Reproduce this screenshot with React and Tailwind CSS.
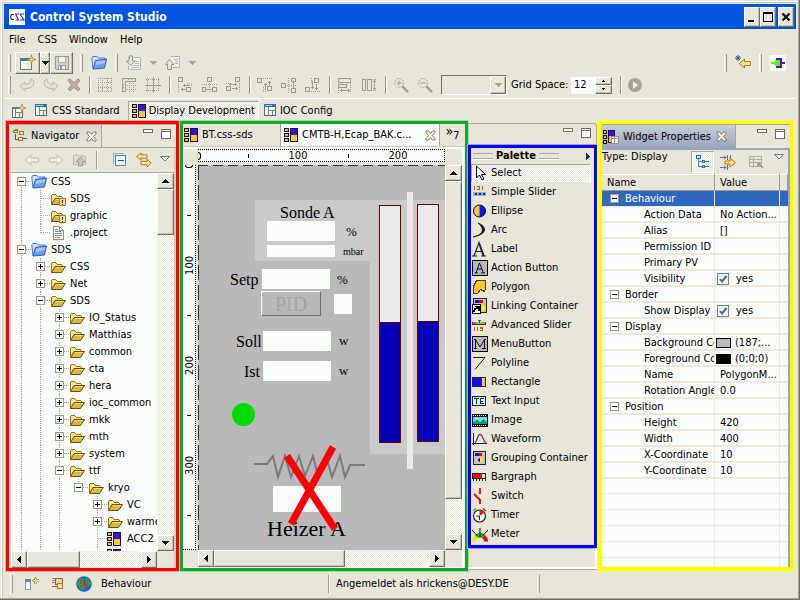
import React from 'react';

const DITHER = 'bg-[repeating-conic-gradient(#fbfdfa_0_25%,#e6e5d7_0_50%)] bg-[length:2px_2px]';
const RAISED = 'border border-t-white border-l-white border-r-[#716f64] border-b-[#716f64] bg-[#e7e6d8] shadow-[inset_-1px_-1px_0_#c4c2b2]';

/* ---------- icons ---------- */

function Svg({ children, w = 16, h = 16, smooth = false }) {
  return (
    <svg width={w} height={h} viewBox={`0 0 ${w} ${h}`} fill="none" className="block shrink-0" shapeRendering={smooth ? 'auto' : 'crispEdges'} aria-hidden="true">
      {children}
    </svg>
  );
}

const DisplayIcon = () => (
  <Svg w={14} h={14}>
    <path d="M0 0h5v4H0zM0 5h5v4H0zM0 10h5v4H0zM6 0h8v14H6z" fill="#1a1030" />
    <path d="M1 1h3v2H1zM1 6h3v2H1zM1 11h3v2H1z" fill="#f5b52a" />
    <path d="M7 1h6v6H7z" fill="#3a0fe0" />
    <path d="M7 7h6v6H7z" fill="#ffc832" />
  </Svg>
);

const PerspectiveIcon = () => (
  <Svg w={12} h={13}>
    <rect x="0.5" y="0.5" width="11" height="11" fill="#eef9ff" stroke="#4a6b86" />
    <path d="M0 0h12v3H0z" fill="#2f6fae" />
    <path d="M1 1h7v1H1z" fill="#8fd0f0" />
    <path d="M4.5 3v8M5 6.5h6M8.5 7v4" stroke="#7d8a6a" />
  </Svg>
);

const OpenPerspectiveIcon = () => (
  <Svg w={14} h={14}>
    <rect x="0.5" y="3.5" width="10" height="10" fill="#f6f4e4" stroke="#5f6a72" />
    <path d="M0 3h8v2H0z" fill="#4d7fa6" />
    <path d="M3.5 5v8M4 8.5h6M7.5 9v4" stroke="#7d8a6a" />
    <path d="M10 0l1 3 3 1-3 1-1 3-1-3-3-1 3-1z" fill="#ffe27a" stroke="#9a7420" strokeWidth="0.6" shapeRendering="auto" />
  </Svg>
);

const FolderIcon = ({ warn }) => (
  <Svg>
    <path d="M1 13V4h1V3h4v1h1v1h5v3H5l-3 5z" fill="#f5e59a" />
    <path d="M1 4h1v9H1zM2 3h4v1H2zM6 4h1v1H6zM7 5h5v1H7zM12 6h1v1h-1z" fill="#8c7a10" />
    <path d="M1.5 13.500L5 7.500h10.500L11.500 13.500z" fill="#dcb83c" stroke="#5f5210" shapeRendering="auto" />
    <path d="M5.500 8.500h8" stroke="#f3dc86" />
    {warn && (
      <g>
        <path d="M9 7h7v8H9z" fill="#b5722a" />
        <path d="M10 8h5v6h-5z" fill="#f7dca0" />
        <path d="M12 9h1v3h-1zM12 13h1v1h-1z" fill="#5a2a00" />
      </g>
    )}
  </Svg>
);

const ProjectIcon = () => (
  <Svg smooth>
    <path d="M2 14L.8 3l1-1.500h4l1.700 1.500h6.500v3" fill="#cfe0fb" stroke="#4b79cf" />
    <path d="M2 14l2.500-8.500L15.500 4l-2 9z" fill="#6f9df0" stroke="#2a5bc0" />
    <path d="M5.300 6.500l9-1.200-.7 3L4.500 10z" fill="#a9c6fa" />
  </Svg>
);

const FileIcon = () => (
  <Svg>
    <path d="M3.5 1.500h6l4 4v9h-10z" fill="#fffef4" stroke="#9a8f62" />
    <path d="M9.500 1.500v4h4" stroke="#9a8f62" />
    <path d="M5 4.500h3M5 6.500h6M5 8.500h7M5 10.500h7M5 12.500h5" stroke="#6f8fc8" />
  </Svg>
);

const TreeTabIcon = () => (
  <Svg>
    <path d="M3.500 6v5.500h4M11 10.500h4M7 4.500h3" stroke="#2f5f9a" />
    <path d="M1 2h2V1h3v4H1zM7 3h5v4H7zM6 9h5v4H6z" fill="#a8741a" />
    <path d="M2 3h3v1H2zM8 4h3v2H8zM7 10h3v2H7z" fill="#ffe79a" />
  </Svg>
);

const CloseX = () => (
  <Svg w={11} h={11} smooth>
    <path d="M1 1h2.500l2 2.500L7.500 1H10v1.500L7.500 5.500 10 8.500V10H7.500l-2-2.500L3.500 10H1V8.500l2.500-3L1 2.500z" fill="#f4f3ea" stroke="#7a786c" />
  </Svg>
);

const Min = () => (
  <Svg w={10} h={5}><rect x="0.5" y="0.5" width="9" height="3" fill="#fff" stroke="#6e6c60" /></Svg>
);
const Max = () => (
  <Svg w={10} h={11}>
    <rect x="0.5" y="0.5" width="9" height="9" fill="#fff" stroke="#6e6c60" />
    <path d="M1 2.500h8" stroke="#6e6c60" />
  </Svg>
);
const ViewMenu = () => (
  <Svg w={10} h={6} smooth><path d="M.5.500h9L5 5z" fill="#fff" stroke="#77756a" /></Svg>
);
const Down = ({ c = '#000' }) => <Svg w={7} h={4}><path d="M0 0h7L3.500 4z" fill={c} /></Svg>;
const Up = () => <Svg w={7} h={4}><path d="M3.500 0L7 4H0z" fill="#000" /></Svg>;
const Left = () => <Svg w={4} h={7}><path d="M4 0v7L0 3.500z" fill="#000" /></Svg>;
const Right = ({ c = '#000' }) => <Svg w={4} h={7}><path d="M0 0v7l4-3.500z" fill={c} /></Svg>;

const ArrowLeftGray = () => (
  <Svg smooth><path d="M1 8l6-5v3h7.500v4H7v3z" fill="#eeede4" stroke="#bdbcb0" /></Svg>
);
const ArrowRightGray = () => (
  <Svg smooth><path d="M15 8L9 3v3H1.500v4H9v3z" fill="#eeede4" stroke="#bdbcb0" /></Svg>
);
const UpFolder = () => (
  <Svg smooth>
    <path d="M1.500 12.500v-9l2-1 3 1 7 1v8z" fill="#deddd2" stroke="#bab9ad" />
    <path d="M8.500 5L13 10h-2.500v4h-4v-4H4z" fill="#c3c4be" stroke="#9d9e97" />
  </Svg>
);
const CollapseAll = () => (
  <Svg>
    <path d="M1.500 11.500v-10h10" stroke="#8bb0c8" />
    <rect x="3.5" y="3.5" width="10" height="10" fill="#e9f7fd" stroke="#4a88ae" />
    <path d="M6 8.500h6" stroke="#1c4f9c" />
  </Svg>
);
const LinkArrows = () => (
  <Svg smooth>
    <path d="M.7 4.500L5 .8v2h6v3.400H5v2z" fill="#ffe6a0" stroke="#b9781a" />
    <path d="M15.300 11L11 7.300v2H5v3.400h6v2z" fill="#ffe6a0" stroke="#b9781a" />
  </Svg>
);
const NewWizard = () => (
  <Svg w={17}>
    <rect x="1.5" y="3.5" width="11" height="11" fill="#f8fbfd" stroke="#5f7ea0" />
    <path d="M1 3h9v3H1z" fill="#3f78b8" />
    <path d="M3 9c5 0 6 2 5 5h4V6z" fill="#f8e9a8" />
    <path d="M12.500 0l1 3.500L17 4.500l-3.500 1-1 3.500-1-3.500-3.500-1 3.500-1z" fill="#ffe88a" stroke="#95701c" strokeWidth="0.7" shapeRendering="auto" />
  </Svg>
);
const Save = () => (
  <Svg>
    <path d="M1.500 1.500h13v13h-12l-1-1z" fill="#cfd3d2" stroke="#959a9c" />
    <path d="M4.500 2v5h7V2" fill="#f2f2ec" stroke="#a5a9aa" />
    <path d="M4.500 14v-4h7v4" fill="#f2f2ec" stroke="#959a9c" />
    <path d="M6 11h2v3H6z" fill="#8a8f92" />
  </Svg>
);
const GrayTri = () => <Svg w={7} h={4}><path d="M0 0h7L3.500 4z" fill="#a9a898" /></Svg>;
const DocArrow = ({ up }) => (
  <Svg smooth>
    <path d={up ? 'M5.500 1.500h9v11h-7' : 'M6.500 2.500h8v12h-12v-4'} fill="#f1f0e6" stroke="#b5b4a8" />
    <path d={up ? 'M9 4.500h4M10 6.500h3M10 8.500h3' : 'M8 6.500h5M9 8.500h4M7 10.500h6M5 12.500h8'} stroke="#b3b7be" />
    <path d={up ? 'M4.500 4.500L9 9.500H6.500v5h-4v-5H.5z' : 'M3 1h3.500v5H9L4.700 10.500.5 6H3z'} fill="#e8e7dc" stroke="#94938a" />
  </Svg>
);
const Undo = ({ flip }) => (
  <Svg smooth>
    <g transform={flip ? 'translate(16 0) scale(-1 1)' : undefined}>
      <path d="M1 9l5-4v2.500c4 0 6-2 6-5.500 3 1 3.500 4 2 6.500-1.500 2.300-4 3-8 3V14z" fill="#e4e3d8" stroke="#b8b7ab" />
    </g>
  </Svg>
);
const DeleteX = () => (
  <Svg w={14} h={14} smooth>
    <path d="M1 2l2-1 4 3.500L11 1l2 1.500L9.500 7l3.500 4-2 2-4-3.500L3 13l-2-2 3.500-4z" fill="#c0a9a6" stroke="#a5918c" />
  </Svg>
);
const G = '#9c9c8e';
const GridIcon = () => (
  <Svg><path d="M1 1.500h14M1 5.500h14M1 10.500h14M1 14.500h14M1.500 1v14M5.500 1v14M10.500 1v14M14.500 1v14" stroke={G} strokeDasharray="1 1" /></Svg>
);
const RulerIcon = () => (
  <Svg>
    <path d="M1.500 1.500h13v3h-10v10h-3zM7.500 1v2M10.500 1v2M1 7.500h2M1 10.500h2" stroke={G} />
    <path d="M8.500 6v9M12.500 6v9M6 8.500h9M6 12.500h9" stroke={G} strokeDasharray="1 1" />
  </Svg>
);
const SnapIcon = () => (
  <Svg>
    <path d="M1 2.500h14M1 13.500h14M2.500 1v14M13.500 1v14" stroke={G} strokeDasharray="1 1" />
    <path d="M0 8h16M8 0v16" stroke={G} />
  </Svg>
);
const ALIGN = [
  { boxes: 'M1.500.500h4v4h-4zM9.500 10.500h4v4h-4z', dots: 'M1.500 6v9M10 6.500h5M14.500 6v3', arrow: 'M4 12.500h5M5.500 11v3M6 8.500h7M7.500 7v3' },
  { boxes: 'M6.500.500h4v4h-4zM1.500 10.500h3v4h-3zM11.500 10.500h4v4h-4z', dots: 'M8.500 6v9M1 7.500h15', arrow: 'M5 12.500h3M9 12.500h2' },
  { boxes: 'M10.500.500h4v4h-4zM1.500 9.500h4v4h-4z', dots: 'M14.500 6v9M1 6.500h5', arrow: 'M7 11.500h6M11.500 10v3M4 7.500h8M10.500 6v3' },
];
const AlignIcon = ({ a = 0, vertical }) => (
  <Svg>
    <g transform={vertical ? 'matrix(0 1 1 0 0 0)' : undefined}>
      <path d={ALIGN[a].boxes} stroke={G} />
      <path d={ALIGN[a].dots} stroke={G} strokeDasharray="1 1" />
      <path d={ALIGN[a].arrow} stroke={G} />
    </g>
  </Svg>
);
const MatchWidth = () => (
  <Svg>
    <path d="M1.500 1.500h12v4h-12zM1.500 7.500h8v3h-8zM3 13.500h10M4 12v3M11 12v3" stroke={G} />
    <path d="M1.500 11v5M13.500 6v10" stroke={G} strokeDasharray="1 1" />
  </Svg>
);
const MatchHeight = () => (
  <Svg>
    <path d="M1.500 2.500h3v11h-3zM6.500 2.500h4v11h-4zM13.500 3v10M12 4.500h3M12 11.500h3" stroke={G} />
    <path d="M10 2.500h6M10 13.500h6" stroke={G} strokeDasharray="1 1" />
  </Svg>
);
const ZoomIcon = ({ plus }) => (
  <Svg smooth>
    <circle cx="6" cy="6" r="4.5" stroke="#a9a99b" strokeDasharray="2 1" />
    <path d={plus ? 'M3.500 6h5M6 3.500v5' : 'M3.500 6h5'} stroke="#a09f90" />
    <path d="M9.500 9.500L15 15" stroke="#a5a596" strokeWidth="2.5" />
  </Svg>
);
const Play = () => (
  <Svg w={14} h={14} smooth><circle cx="7" cy="7" r="7" fill="#a4a596" /><path d="M5 3l5 4-5 4z" fill="#f1f0e6" /></Svg>
);
const LastEdit = () => (
  <Svg smooth>
    <path d="M4.500 8.500L9.500 4v2.500h6v4h-6V13z" fill="#ffe08a" stroke="#b07a14" />
    <path d="M3 0v6M0 3h6M1 1l4 4M5 1L1 5" stroke="#2a4f7a" strokeWidth="0.9" />
  </Svg>
);
const Plug = () => (
  <Svg>
    <path d="M0 0h16v16H0z" fill="#fafdfa" />
    <path d="M6 3h6v10H6v-2h4V5H6zM12 7h3v2h-3z" fill="#4a0ee0" />
    <path d="M1 7h4V5h5v6H5V9H1z" fill="#63f500" />
  </Svg>
);
const Logo = () => (
  <Svg>
    <path d="M0 0h16v16H0z" fill="#fff" />
    <path d="M5 5.500H2.500L1.500 8l1 2.500H5M6.500 5l3 6H6.500M11 5l4 6h-4M6.500 5H10M11 5h4" stroke="#3a3a6a" strokeWidth="1.2" shapeRendering="auto" />
  </Svg>
);
const WidgetIcon = () => (
  <Svg>
    <path d="M0 1h4v4H0zM0 6h4v4H0zM0 11h4v4H0zM5 1h7v13H5z" fill="#1a1030" />
    <path d="M1 2h2v2H1zM1 7h2v2H1zM1 12h2v2H1z" fill="#f5b52a" />
    <path d="M6 2h5v5H6z" fill="#3a0fe0" /><path d="M6 7h3v6H6z" fill="#ffc832" />
    <rect x="8.5" y="7.5" width="7" height="7" fill="#fff" stroke="#8d8d86" />
    <path d="M8 9.500h8M11.500 8v7" stroke="#8d8d86" />
  </Svg>
);
const CategoriesIcon = () => (
  <Svg>
    <path d="M3.500 4v9M4 7.500h3M4 12.500h3" stroke="#4b80b4" />
    <rect x="1.5" y="1.5" width="4" height="3" fill="#b7dcf2" stroke="#2f6ea8" />
    <rect x="7.5" y="6.5" width="2" height="2" fill="#b7dcf2" stroke="#2f6ea8" />
    <rect x="7.5" y="11.5" width="2" height="2" fill="#b7dcf2" stroke="#2f6ea8" />
    <path d="M10 7.500h4M10 12.500h4" stroke="#3a7ac0" />
  </Svg>
);
const FilterIcon = () => (
  <Svg smooth>
    <path d="M5 7h5V4l5.500 4.500L10 13v-3H5z" fill="#ffe08a" stroke="#b07a14" />
    <path d="M0 3.500h6M4 1.500l2 2-2 2M7.500 1v5M10.500 1v3M0 13.500h6M4 11.500l2 2-2 2M7.500 11v5" stroke="#5d7182" />
  </Svg>
);
const DefaultsIcon = () => (
  <Svg smooth>
    <path d="M1.500 2.500h12v10h-12zM1 5.500h13M1 8.500h8M5.500 3v10" stroke="#adac9e" />
    <path d="M15 14l-5-5m0 3V9h3" stroke="#98978a" strokeWidth="1.5" />
  </Svg>
);

const P = {
  select: <Svg><path d="M4.500 1v12l3-3 2.500 5 2-1-2.500-4.500h4z" fill="#fff" stroke="#000" shapeRendering="auto" /></Svg>,
  slider: (
    <Svg>
      <path d="M2 2h1v4H2zM5 2h3v4H7V3H5zM5 5h2v1H5zM10 2h1v4h-1z" fill="#b85a10" />
      <path d="M1 8h13v4H1z" fill="#86aede" /><path d="M3 9h2v2H3zM7 9h2v2H7zM11 9h2v2h-2z" fill="#1c2c50" />
    </Svg>
  ),
  ellipse: <Svg smooth><circle cx="7.5" cy="8" r="6" fill="#1414e6" /><path d="M7.500 2a6 6 0 000 12z" fill="#ffc832" /><circle cx="7.5" cy="8" r="6" stroke="#101020" /></Svg>,
  arc: <Svg smooth><path d="M6 1c9 3.500 10 11-5 14C13 12 12 6 6 1z" fill="#111" stroke="#111" strokeWidth="0.8" /></Svg>,
  label: <Svg smooth><path d="M0 15h5M9 15h5M2 15L7 1.500l5 13.500M4 10.500h6.500" stroke="#222" strokeWidth="1.2" /><path d="M7 2l4.500 13" stroke="#222" strokeWidth="1.8" /></Svg>,
  action: <Svg><path d="M.5.500h15v15H.5z" fill="#b7b8b8" stroke="#000" /><path d="M3 13h3M9 13h4M4 13L7.500 3 11.500 13M5 9h5" stroke="#111" shapeRendering="auto" /></Svg>,
  polygon: <Svg><path d="M1.500 14.500v-7l3-6h9v8l-1 3-4-2-3 4z" fill="#ffc832" stroke="#4a3a10" /></Svg>,
  linking: (
    <Svg>
      <path d="M1.500.500h13v14h-13z" fill="#c3c4c4" stroke="#222" />
      <path d="M3 2h4v3H3z" fill="#1414e6" /><path d="M7 2h4v3H7z" fill="#f00000" /><path d="M10 6l4 4-4 4z" fill="#ffee00" />
      <path d="M.5 6.500h8v9h-8z" fill="#fff" stroke="#000" /><path d="M2 14c0-3 1-4 4-4M3 8.500h4v4" stroke="#000" strokeWidth="1.5" />
    </Svg>
  ),
  advanced: (
    <Svg>
      <path d="M0 5h14v3H0z" fill="#2c3a20" /><path d="M1 5h3v2H1z" fill="#f33" /><path d="M4 5h6v2H4z" fill="#6d2" /><path d="M10 5h3v2h-3z" fill="#f80" />
      <path d="M6 3h3v1H8v2H7V4H6z" fill="#3a3ae0" /><path d="M2 10h1v4H2zM5 10h1v4H5zM8 10h3v4H8v-1h2v-1H8z" fill="#b85a10" />
    </Svg>
  ),
  menu: <Svg><path d="M.5.500h15v15H.5z" fill="#b7b8b8" stroke="#000" /><path d="M2 12.500h3M10 12.500h4M3.500 12V3.500L8 11l4.500-7.500V12M2 3.500h2M12 3.500h2" stroke="#111" shapeRendering="auto" /></Svg>,
  polyline: <Svg smooth><path d="M1 2.500h12L3 14.500" stroke="#222" /></Svg>,
  rectangle: <Svg><path d="M.5 3.500h13v9H.5z" fill="#1010f0" stroke="#222" /><path d="M10 4h3v8h-3z" fill="#ffc832" /></Svg>,
  textinput: <Svg><path d="M.5 3.500h13v9H.5z" fill="#cdf6fb" stroke="#222" /><path d="M2 5.500h5M4.500 5v6M8.500 5v6M8 5.500h4M8 8h3M8 10.500h4" stroke="#224" /></Svg>,
  image: (
    <Svg>
      <path d="M0 2h16v13H0z" fill="#101010" /><path d="M1 5h14v7H1z" fill="#5fe0f4" /><path d="M1 12v-2l4-2 3 2 3-3 4 3v2z" fill="#1c9c5c" />
      <path d="M1 3.500h14M1 13.500h14" stroke="#fff" strokeDasharray="1 1" /><path d="M3 6h3v1H3z" fill="#eafcff" />
    </Svg>
  ),
  waveform: <Svg smooth><path d="M2 3h12v9H2z" fill="#d8f5f5" /><path d="M1.500 2v12M0 12.500h15" stroke="#222" /><path d="M3 12C5 11 5 3.500 8 3.500S11 11 14 12" stroke="#d01818" strokeWidth="1.3" /></Svg>,
  grouping: (
    <Svg>
      <path d="M1.500 1.500h12v13h-12z" fill="#c3c4c4" stroke="#222" />
      <path d="M3 3h4v3H3z" fill="#1414e6" /><path d="M7 3h3v3H7z" fill="#f00000" /><path d="M8 7v6L5 10z" fill="#1414e6" /><path d="M8 7v6l3-3z" fill="#ffee00" />
    </Svg>
  ),
  bargraph: <Svg><path d="M.5 4.500h13v5H.5z" fill="#f01010" stroke="#222" /><path d="M10 5h3v4h-3z" fill="#c4f5b4" /><path d="M1.500 10v2M4.500 10v2M7.500 10v2M10.500 10v2M13.500 10v2" stroke="#222" /></Svg>,
  switch: <Svg smooth><path d="M8 0v6M2 6l6 6M8 11v5" stroke="#f01010" strokeWidth="2" /></Svg>,
  timer: (
    <Svg smooth>
      <circle cx="7.5" cy="9" r="6" fill="#fff" stroke="#222" strokeWidth="1.2" /><path d="M7.500 9V3.500A5.500 5.500 0 0112 6z" fill="#f01010" />
      <path d="M7.500 9v4M4 9h3" stroke="#222" /><path d="M1 4l3-2.500" stroke="#1cc01c" strokeWidth="1.5" /><path d="M11 1.500L14 4" stroke="#f01010" strokeWidth="1.5" />
    </Svg>
  ),
  meter: (
    <Svg smooth>
      <path d="M0 15.500a8 8 0 013-6.500l3 3a4 4 0 00-2 3.500z" fill="#f5e400" />
      <path d="M3 9a8 8 0 0110 0l-3 3a4 4 0 00-4 0z" fill="#18b818" />
      <path d="M13 9a8 8 0 013 6.500h-4a4 4 0 00-2-3.500z" fill="#e01010" />
      <path d="M8 11V2M0 4l5 5.500M16 4l-5 5.500" stroke="#111" />
    </Svg>
  ),
};

/* ---------- shared parts ---------- */

const Grip = () => <span className="h-[18px] w-[3px] shrink-0 border-l border-r border-l-white border-r-[#9c9a8c]" />;
const Sep = () => <span className="-mr-[2px] h-[18px] w-[2px] shrink-0 border-l border-r border-l-[#9c9a8c] border-r-white" />;

function Tool({ name, children }) {
  return <button type="button" aria-label={name} className="flex h-5 shrink-0 items-center justify-center">{children}</button>;
}

function ScrollV({ thumb }) {
  return (
    <div className={`flex min-h-0 flex-col ${DITHER}`}>
      <button type="button" aria-label="Scroll up" className={`flex h-4 shrink-0 items-center justify-center ${RAISED}`}><Up /></button>
      <div className="min-h-0 flex-1"><div className={`${thumb} ${RAISED}`} /></div>
      <button type="button" aria-label="Scroll down" className={`flex h-4 shrink-0 items-center justify-center ${RAISED}`}><Down /></button>
    </div>
  );
}

function ScrollH({ thumb }) {
  return (
    <div className={`flex min-w-0 ${DITHER}`}>
      <button type="button" aria-label="Scroll left" className={`flex w-4 shrink-0 items-center justify-center ${RAISED}`}><Left /></button>
      <div className="flex min-w-0 flex-1"><div className={`${thumb} ${RAISED}`} /></div>
      <button type="button" aria-label="Scroll right" className={`flex w-4 shrink-0 items-center justify-center ${RAISED}`}><Right /></button>
    </div>
  );
}

function ViewButtons() {
  return (
    <div className="flex items-start gap-2 px-[5px] pt-1">
      <button type="button" aria-label="Minimize view"><Min /></button>
      <button type="button" aria-label="Maximize view"><Max /></button>
    </div>
  );
}

/* ---------- navigator ---------- */

// g holds one character per indent column: "|" line, "." blank, "+" / "-" node box,
// "T" branch, "L" last branch. `last` marks a node box with no sibling below it.
const TREE = [
  { g: '-', top: true, icon: 'project', name: 'CSS' },
  { g: '|T', icon: 'warn', name: 'SDS' },
  { g: '|T', icon: 'warn', name: 'graphic' },
  { g: '|L', icon: 'file', name: '.project' },
  { g: '-', icon: 'project', name: 'SDS' },
  { g: '|+', icon: 'folder', name: 'CSS' },
  { g: '|+', icon: 'folder', name: 'Net' },
  { g: '|-', icon: 'folder', name: 'SDS' },
  { g: '||+', icon: 'folder', name: 'IO_Status' },
  { g: '||+', icon: 'folder', name: 'Matthias' },
  { g: '||+', icon: 'folder', name: 'common' },
  { g: '||+', icon: 'folder', name: 'cta' },
  { g: '||+', icon: 'folder', name: 'hera' },
  { g: '||+', icon: 'folder', name: 'ioc_common' },
  { g: '||+', icon: 'folder', name: 'mkk' },
  { g: '||+', icon: 'folder', name: 'mth' },
  { g: '||+', icon: 'folder', name: 'system' },
  { g: '||-', icon: 'folder', name: 'ttf' },
  { g: '|||-', last: true, icon: 'folder', name: 'kryo' },
  { g: '|||.+', icon: 'folder', name: 'VC' },
  { g: '|||.+', icon: 'folder', name: 'warme' },
  { g: '|||.T', icon: 'display', name: 'ACC2' },
  { g: '|||.T', icon: 'display', name: '' },
];

function Guide({ kind, top, last }) {
  if (kind === '.') return <span className="w-[19px] shrink-0" />;
  const box = kind === '+' || kind === '-';
  const half = kind === 'L' || last;
  return (
    <span className="relative flex h-full w-[19px] shrink-0 items-center justify-center">
      <span className={`absolute left-[9px] border-l border-dotted border-[#a9a898] ${top ? 'top-1/2' : 'top-0'} ${half ? 'bottom-1/2' : 'bottom-0'}`} />
      {kind !== '|' && <span className="absolute top-[8px] right-0 left-[9px] border-t border-dotted border-[#a9a898]" />}
      {box && (
        <button type="button" aria-label={kind === '+' ? 'Expand' : 'Collapse'} className="relative">
          <Svg w={9} h={9}>
            <rect x="0.5" y="0.5" width="8" height="8" fill="#fff" stroke="#9a9889" />
            <path d={kind === '+' ? 'M2 4.500h5M4.500 2v5' : 'M2 4.500h5'} stroke="#000" />
          </Svg>
        </button>
      )}
    </span>
  );
}

const TREE_ICONS = {
  project: <ProjectIcon />,
  warn: <FolderIcon warn />,
  file: <FileIcon />,
  folder: <FolderIcon />,
  display: <DisplayIcon />,
};

function Navigator() {
  return (
    <section className="flex w-[173px] shrink-0 flex-col border-[3px] border-[#fb0000] shadow-[0_0_0_1px_#f0b0a0]">
      <header className="flex h-6 shrink-0 justify-between border-t border-b border-[#a9a898] pl-px">
        <div className="flex items-center gap-[3px] border-r border-[#a9a898] bg-gradient-to-b from-[#d9d9d2] to-[#e7e6d8] pr-1 pl-[2px]">
          <TreeTabIcon />
          <h2 className="pr-1">Navigator</h2>
          <button type="button" aria-label="Close"><CloseX /></button>
        </div>
        <ViewButtons />
      </header>
      <div className="flex min-h-0 flex-1 flex-col border-x-2 border-[#cfcec3]">
        <div className="flex h-[25px] shrink-0 items-center justify-end gap-2 border-b border-[#a9a898] pr-1">
          <Tool name="Back"><ArrowLeftGray /></Tool>
          <Tool name="Forward"><ArrowRightGray /></Tool>
          <Tool name="Up"><UpFolder /></Tool>
          <Sep />
          <span />
          <Tool name="Collapse all"><CollapseAll /></Tool>
          <Tool name="Link with editor"><LinkArrows /></Tool>
          <button type="button" aria-label="View menu" className="self-start pt-2"><ViewMenu /></button>
        </div>
        <div className="grid min-h-0 flex-1 grid-cols-[1fr_17px] grid-rows-[1fr_17px] bg-[#f9fcf9]">
          <ul className="min-h-0 overflow-hidden">
            {TREE.map((n, i) => (
              <li key={i} className="flex h-[17px] items-center pl-px whitespace-nowrap">
                {n.g.split('').map((c, k) => (
                  <Guide key={k} kind={c} top={n.top} last={n.last && c === '-'} />
                ))}
                <span className="flex w-5 shrink-0">{TREE_ICONS[n.icon]}</span>
                {n.name}
              </li>
            ))}
          </ul>
          <ScrollV thumb="h-[46px]" />
          <ScrollH thumb="w-[53px]" />
          <div className="bg-[#e7e6d8]" />
        </div>
      </div>
    </section>
  );
}

/* ---------- editor ---------- */

function Value({ name, className }) {
  return <input aria-label={name} readOnly className={`absolute bg-[#f9fcf9] ${className}`} />;
}

function Tank({ className, level }) {
  return (
    <div className={`absolute flex h-[238px] w-[22px] flex-col justify-end border border-[#6a0000] bg-[#e8ebe8] ${className}`}>
      <div className="border-t border-[#6a0000] bg-[#0800b4]" style={{ height: level }} />
    </div>
  );
}

function Canvas() {
  return (
    <div className="relative min-h-0 overflow-hidden bg-[#b9b9b9] font-['Liberation_Serif',serif] text-[16px] leading-4 text-black">
      <div className="absolute top-0 right-0 left-0 h-px bg-[repeating-linear-gradient(to_right,#333_0_10px,transparent_10px_15px)]" />
      <div className="absolute top-0 bottom-0 left-0 w-px bg-[repeating-linear-gradient(to_bottom,#333_0_15px,transparent_15px_20px)]" />
      <div className="absolute top-[35px] right-0 left-[57px] h-[61px] bg-[#c9c9c9]" />
      <div className="absolute top-[96px] right-0 left-[172px] h-[193px] bg-[#c9c9c9]" />
      <span className="absolute top-[40px] left-[82px]">Sonde A</span>
      <Value name="Sonde A" className="top-[56px] left-[69px] h-5 w-[68px]" />
      <Value name="Sonde A mbar" className="top-[80px] left-[69px] h-3 w-[68px]" />
      <span className="absolute top-[59px] left-[148px] text-[13px]">%</span>
      <span className="absolute top-[79px] left-[145px] text-[10px]">mbar</span>
      <span className="absolute top-[107px] left-[32px]">Setp</span>
      <Value name="Setp" className="top-[104px] left-[64px] h-5 w-[68px]" />
      <span className="absolute top-[107px] left-[139px] text-[13px]">%</span>
      <button type="button" className="absolute top-[126px] left-[63px] h-[25px] w-[60px] border border-t-white border-r-[#716f64] border-b-[#716f64] border-l-white text-[20px] leading-5 text-[#a5a596]">PID</button>
      <div className="absolute top-[129px] left-[136px] h-5 w-[18px] bg-[#f9fcf9]" />
      <span className="absolute top-[169px] left-[38px]">Soll</span>
      <Value name="Soll" className="top-[166px] left-[65px] h-5 w-[68px]" />
      <span className="absolute top-[168px] left-[141px] text-[13px]">w</span>
      <span className="absolute top-[199px] left-[46px]">Ist</span>
      <Value name="Ist" className="top-[196px] left-[65px] h-5 w-[68px]" />
      <span className="absolute top-[198px] left-[141px] text-[13px]">w</span>
      <div className="absolute top-[238px] left-[34px] size-[23px] rounded-full bg-[#00dc00]" />
      <Tank className="top-[40px] left-[181px]" level={120} />
      <Tank className="top-[39px] left-[219px]" level={120} />
      <div className="absolute top-[27px] left-[209px] h-[277px] w-[6px] bg-[#e8ebe8]" />
      <Value name="Heizer A" className="top-[321px] left-[75px] h-[26px] w-[68px]" />
      <span className="absolute top-[352px] left-[69px] text-[22px] leading-6">Heizer A</span>
      <svg width="120" height="100" viewBox="0 0 120 100" fill="none" className="absolute top-[275px] left-[50px]" aria-hidden="true">
        <path d="M6 24h13l6-8 5 21 7-21 6 21 8-21 6 20 8-20 5 20 8-20 6 21 8-21 5 21 5-12h15" stroke="#7a7a7a" strokeWidth="2" />
        <path d="M39 16l48 73M85 7L43 84" stroke="#fb0000" strokeWidth="7" />
      </svg>
    </div>
  );
}

const H_RULER = ['', '100', '', '200', ''];
const V_RULER = ['', '100', '', '200', '', '300', ''];

function Editor() {
  return (
    <section className="flex min-w-0 flex-1 flex-col border-[3px] border-[#10a828] shadow-[0_0_0_1px_#a8d8a8]">
      <header className="flex h-[23px] shrink-0 border-b border-b-[#c9c8bc]">
        <div className="flex w-[98px] items-center gap-1 border-r border-[#a9a898] pl-px"><DisplayIcon />BT.css-sds</div>
        <div className="flex min-w-0 flex-1 items-center gap-1 border-r border-[#a9a898] bg-[#f9fcf9] px-[3px]">
          <DisplayIcon />
          <span className="flex-1 overflow-hidden whitespace-nowrap">CMTB-H,Ecap_BAK.c...</span>
          <button type="button" aria-label="Close"><CloseX /></button>
        </div>
        <button type="button" className="flex w-[25px] items-center justify-center leading-none">
          <span className="pb-2 text-sm leading-none">»</span><span>7</span>
        </button>
      </header>
      <div className="grid min-h-0 flex-1 grid-cols-[15px_1fr_17px] grid-rows-[16px_1fr_17px] border-t-2 border-r-[3px] border-b border-[#f9fcf9] bg-[#e7e6d8]">
        <span />
        <div className="mb-[3px] flex overflow-hidden border-y border-r border-dotted border-black bg-[#f9fcf9]">
          <span className="flex w-[25px] shrink-0 items-center"><span className="h-2 w-[3px] rounded-r-full border border-l-0 border-black" /></span>
          {H_RULER.map((t, i) => (
            <span key={i} className="flex w-[50px] shrink-0 items-center justify-center">{t || <span className="h-1 w-px bg-black" />}</span>
          ))}
        </div>
        <span />
        <div className="mr-[2px] flex min-h-0 flex-col overflow-hidden border-r border-b border-dotted border-black bg-[#f9fcf9]">
          <span className="flex h-[25px] shrink-0 justify-center"><span className="h-[3px] w-2 rounded-b-full border border-t-0 border-black" /></span>
          {V_RULER.map((t, i) => (
            <span key={i} className="flex h-[50px] shrink-0 items-center justify-center">
              {t ? <span className="rotate-180 leading-none [writing-mode:vertical-rl]">{t}</span> : <span className="h-px w-1 bg-black" />}
            </span>
          ))}
        </div>
        <Canvas />
        <ScrollV thumb="h-[318px] max-h-full" />
        <span />
        <ScrollH thumb="w-[131px]" />
        <span />
      </div>
    </section>
  );
}

/* ---------- palette ---------- */

const PALETTE = [
  ['slider', 'Simple Slider'], ['ellipse', 'Ellipse'], ['arc', 'Arc'], ['label', 'Label'], ['action', 'Action Button'],
  ['polygon', 'Polygon'], ['linking', 'Linking Container'], ['advanced', 'Advanced Slider'], ['menu', 'MenuButton'],
  ['polyline', 'Polyline'], ['rectangle', 'Rectangle'], ['textinput', 'Text Input'], ['image', 'Image'],
  ['waveform', 'Waveform'], ['grouping', 'Grouping Container'], ['bargraph', 'Bargraph'], ['switch', 'Switch'],
  ['timer', 'Timer'], ['meter', 'Meter'],
];

const Ridge = () => <span className="h-[6px] w-5 border-y border-[#a9a898] shadow-[0_1px_0_#fff]" />;

function Palette() {
  return (
    <aside className="flex w-[129px] shrink-0 flex-col">
      <div className="mt-[2px] mb-[-2px] flex h-6 shrink-0 justify-end rounded-tr border-t border-r border-[#a9a898]"><ViewButtons /></div>
      <section className="min-h-0 flex-1 overflow-hidden border-[3px] border-[#0404f8] shadow-[0_0_0_1px_#a0a0e8]">
        <header className="flex h-4 items-center gap-[3px] px-[2px]">
          <Ridge />
          <h2 className="font-bold">Palette</h2>
          <Ridge />
          <button type="button" aria-label="Hide palette" className="ml-auto pr-[2px]"><Right c="#0a2a6a" /></button>
        </header>
        <button type="button" className={`flex h-[18px] w-[120px] items-center gap-[3px] border border-t-[#a9a898] border-r-white border-b-white border-l-[#a9a898] ${DITHER}`}>{P.select}Select</button>
        {PALETTE.map(([icon, name]) => (
          <button key={name} type="button" className="flex h-[19px] w-full items-center gap-[3px] pl-px whitespace-nowrap">{P[icon]}{name}</button>
        ))}
      </section>
      <div className="mb-[2px] h-[21px] shrink-0 border-r-2 border-b-2 border-white shadow-[1px_1px_0_#a9a898]" />
    </aside>
  );
}

/* ---------- properties ---------- */

const PROPS = [
  { group: 'Behaviour', on: true },
  { name: 'Action Data', value: 'No Action...' },
  { name: 'Alias', value: '[]' },
  { name: 'Permission ID', value: '' },
  { name: 'Primary PV', value: '' },
  { name: 'Visibility', value: 'yes', check: true },
  { group: 'Border' },
  { name: 'Show Display B', value: 'yes', check: true },
  { group: 'Display' },
  { name: 'Background Co', value: '(187;...', swatch: 'bg-[#bbbbbb]' },
  { name: 'Foreground Co', value: '(0;0;0)', swatch: 'bg-black' },
  { name: 'Name', value: 'PolygonM...' },
  { name: 'Rotation Angle', value: '0.0' },
  { group: 'Position' },
  { name: 'Height', value: '420' },
  { name: 'Width', value: '400' },
  { name: 'X-Coordinate', value: '10' },
  { name: 'Y-Coordinate', value: '10' },
];

function PropValue({ row }) {
  if (row.check) {
    return (
      <label className="flex items-center gap-[7px] pl-[2px]">
        <span className="relative flex size-3">
          <input type="checkbox" defaultChecked className="peer size-3 appearance-none border border-[#5f86ac] bg-[#f4f8fa]" />
          <span className="pointer-events-none absolute inset-0 hidden peer-checked:block"><Svg w={12} h={12} smooth><path d="M3 6l2 2.500L9.500 3" stroke="#4a6088" strokeWidth="2" /></Svg></span>
        </span>
        {row.value}
      </label>
    );
  }
  if (row.swatch) {
    return <span className="flex items-center gap-1 pl-px"><span className={`h-[10px] w-[15px] border border-black ${row.swatch}`} />{row.value}</span>;
  }
  return <span className="pl-[5px]">{row.value}</span>;
}

function Properties() {
  return (
    <section className="ml-px flex w-[196px] shrink-0 flex-col border-[4px] border-t-[3px] border-[#fdfd00] shadow-[0_0_0_1px_#f2f0a0]">
      <header className="flex h-6 shrink-0 justify-between border-t border-[#a9a898]">
        <div className="flex items-center gap-1 border-r border-[#a9a898] bg-gradient-to-b from-[#c9cdd6] to-[#99a6c0] pr-2 pl-px">
          <WidgetIcon />
          <h2 className="whitespace-nowrap">Widget Properties</h2>
          <button type="button" aria-label="Close" className="pl-px"><CloseX /></button>
        </div>
        <ViewButtons />
      </header>
      <div className="flex min-h-0 flex-1 flex-col border-t-2 border-r-2 border-[#99a6c0]">
        <div className="flex h-6 shrink-0 justify-between">
          <span>Type: Display</span>
          <div className="flex items-center gap-[6px] pr-1">
            <button type="button" aria-label="Show categories" className={`flex h-[22px] w-[23px] items-center justify-center border border-t-[#a9a898] border-r-white border-b-white border-l-[#a9a898] ${DITHER}`}><CategoriesIcon /></button>
            <Tool name="Filter"><FilterIcon /></Tool>
            <span />
            <Tool name="Restore default"><DefaultsIcon /></Tool>
            <button type="button" aria-label="View menu" className="self-start pt-1 pl-1"><ViewMenu /></button>
          </div>
        </div>
        <div className="min-h-0 flex-1 overflow-hidden bg-[#f9fcf9] bg-[repeating-linear-gradient(to_bottom,transparent_0_15px,#ebe8dc_15px_16px)]">
          <table className="h-full w-full table-fixed border-collapse leading-[15px]">
            <colgroup><col /><col className="w-[65px]" /><col className="w-[8px]" /></colgroup>
            <thead>
              <tr className="h-4">
                {['Name', 'Value', ''].map((t) => (
                  <th key={t} className="h-4 border-t border-r border-b border-t-white border-r-[#9c9a8c] border-b-[#9c9a8c] bg-[#e7e6d8] p-0 pl-[5px] text-left font-normal">{t}</th>
                ))}
              </tr>
            </thead>
            <tbody>
              {PROPS.map((r) => (
                <tr key={r.group || r.name} className={`h-4 whitespace-nowrap ${r.on ? 'bg-[#2f66c0] text-white' : ''}`}>
                  <td className="h-4 overflow-hidden border-r border-b border-[#ebe8dc] p-0">
                    {r.group ? (
                      <span className="flex items-center gap-[6px] pl-2">
                        <Svg w={9} h={9}><rect x="0.5" y="0.5" width="8" height="8" fill="#fff" stroke="#9a9889" /><path d="M2 4.500h5" stroke="#000" /></Svg>
                        {r.group}
                      </span>
                    ) : (
                      <span className="block overflow-hidden pl-[42px]">{r.name}</span>
                    )}
                  </td>
                  <td className="h-4 overflow-hidden border-r border-b border-[#ebe8dc] p-0">{!r.group && <PropValue row={r} />}</td>
                  <td className="h-4 border-b border-[#ebe8dc] p-0" />
                </tr>
              ))}
              <tr><td className="border-r border-[#ebe8dc]" /><td className="border-r border-[#ebe8dc]" /><td /></tr>
            </tbody>
          </table>
        </div>
      </div>
    </section>
  );
}

/* ---------- window ---------- */

function TitleBar() {
  const btn = `flex h-5 w-4 items-center justify-center ${RAISED}`;
  return (
    <header className="flex h-[25px] shrink-0 items-center bg-[#0054e0] pr-[2px] pl-[5px]">
      <Logo />
      <h1 className="pl-[5px] text-[12px] font-bold text-white">Control System Studio</h1>
      <div className="ml-auto flex">
        <button type="button" aria-label="Minimize" className={btn}><Svg w={10} h={10}><path d="M1 8h6v2H1z" fill="#000" /></Svg></button>
        <button type="button" aria-label="Maximize" className={btn}><Svg w={10} h={10}><path d="M.5 1h9v8.500h-9z" stroke="#000" /><path d="M0 0h10v2H0z" fill="#000" /></Svg></button>
        <button type="button" aria-label="Close window" className={`ml-[2px] ${btn}`}><Svg w={10} h={10} smooth><path d="M1.500 1.500l7 7M8.500 1.500l-7 7" stroke="#000" strokeWidth="2.2" /></Svg></button>
      </div>
    </header>
  );
}

function Toolbars() {
  return (
    <div className="shrink-0 border-b border-white pb-[2px]">
      <div className="flex h-[23px] items-center pl-1">
        <Grip />
        <button type="button" aria-label="New" className={`ml-1 flex h-[22px] w-[25px] items-center justify-center ${RAISED}`}><NewWizard /></button>
        <button type="button" aria-label="New menu" className={`flex h-[22px] w-[10px] items-center justify-center ${RAISED}`}><Down /></button>
        <button type="button" aria-label="Save" className={`flex h-[22px] w-[23px] items-center justify-center ${RAISED}`}><Save /></button>
        <div className="flex flex-1 items-center gap-2 pl-[7px]">
          <Grip />
          <Tool name="Open"><ProjectIcon /></Tool>
          <Grip />
          <Tool name="Import"><DocArrow /></Tool>
          <Tool name="Import menu"><GrayTri /></Tool>
          <Tool name="Export"><DocArrow up /></Tool>
          <Tool name="Export menu"><GrayTri /></Tool>
          <span className="flex flex-1 items-center justify-end gap-2 pr-[10px]">
            <Grip />
            <Tool name="Last edit"><LastEdit /></Tool>
            <Grip />
            <Tool name="Connections"><Plug /></Tool>
          </span>
        </div>
      </div>
      <div className="flex h-[22px] items-center gap-2 pl-1">
        <Grip />
        <Tool name="Undo"><Undo /></Tool>
        <Tool name="Redo"><Undo flip /></Tool>
        <Tool name="Delete"><DeleteX /></Tool>
        <Sep />
        <Tool name="Grid"><GridIcon /></Tool>
        <Tool name="Ruler"><RulerIcon /></Tool>
        <Tool name="Snap"><SnapIcon /></Tool>
        <Sep />
        <Tool name="Align left"><AlignIcon /></Tool>
        <Tool name="Align center"><AlignIcon a={1} /></Tool>
        <Tool name="Align right"><AlignIcon a={2} /></Tool>
        <Sep />
        <Tool name="Align top"><AlignIcon vertical /></Tool>
        <Tool name="Align middle"><AlignIcon a={1} vertical /></Tool>
        <Tool name="Align bottom"><AlignIcon a={2} vertical /></Tool>
        <Sep />
        <Tool name="Match width"><MatchWidth /></Tool>
        <Tool name="Match height"><MatchHeight /></Tool>
        <Sep />
        <Tool name="Zoom in"><ZoomIcon plus /></Tool>
        <Tool name="Zoom out"><ZoomIcon /></Tool>
        <div className="flex items-center gap-1">
          <div className="relative flex h-5 w-[66px] border border-t-[#716f64] border-r-white border-b-white border-l-[#716f64]">
            <select aria-label="Zoom" disabled className="w-full appearance-none bg-transparent"><option /></select>
            <span className={`pointer-events-none absolute inset-y-0 right-0 flex w-4 items-center justify-center ${RAISED}`}><Down c="#a4a393" /></span>
          </div>
          <label htmlFor="grid-space" className="w-[56px] whitespace-nowrap">Grid Space:</label>
          <div className="flex h-[17px]">
            <input id="grid-space" defaultValue="12" className="w-6 bg-[#f9fcf9] pl-[3px]" />
            <div className="flex w-[17px] flex-col">
              <button type="button" aria-label="Increase" className={`flex flex-1 items-center justify-center ${RAISED}`}><Svg w={3} h={2}><path d="M1 0h1v1h1v1H0V1h1z" fill="#000" /></Svg></button>
              <button type="button" aria-label="Decrease" className={`flex flex-1 items-center justify-center ${RAISED}`}><Svg w={3} h={2}><path d="M0 0h3v1H2v1H1V1H0z" fill="#000" /></Svg></button>
            </div>
          </div>
        </div>
        <Sep />
        <Tool name="Run"><Play /></Tool>
      </div>
    </div>
  );
}

export default function App() {
  return (
    <div className="flex h-screen w-full flex-col overflow-hidden bg-[#e7e6d8] p-1 font-['DejaVu_Sans_Condensed','DejaVu_Sans',sans-serif] text-[11px] leading-[14px] text-black shadow-[inset_-1px_-1px_0_#716f64,inset_-2px_-2px_0_#aaa899,inset_1px_1px_0_#e7e6d8,inset_2px_2px_0_#ffffff,inset_3px_3px_0_#c9c8bc]">
      <TitleBar />
      <nav className="flex h-[22px] shrink-0 items-center gap-3 pl-[5px]">
        <button type="button">File</button>
        <button type="button">CSS</button>
        <button type="button">Window</button>
        <button type="button">Help</button>
      </nav>
      <Toolbars />
      <div className="flex h-[22px] shrink-0 items-center pt-px pl-2">
        <button type="button" aria-label="Open perspective"><OpenPerspectiveIcon /></button>
        <button type="button" className="ml-[9px] flex items-center gap-[5px]"><PerspectiveIcon />CSS Standard</button>
        <button type="button" className={`ml-2 flex h-5 items-center gap-[3px] border border-t-[#a9a898] border-r-white border-b-white border-l-[#a9a898] px-[3px] ${DITHER}`}><DisplayIcon />Display Development</button>
        <button type="button" className="ml-[5px] flex items-center gap-1"><PerspectiveIcon />IOC Config</button>
      </div>
      <main className="flex min-h-0 flex-1 pr-[2px] pl-[2px]">
        <Navigator />
        <div className="ml-px flex min-w-0 flex-1">
          <Editor />
          <Palette />
        </div>
        <Properties />
      </main>
      <footer className="flex h-[25px] shrink-0 items-center pl-[6px]">
        <Grip />
        <div className="flex w-[315px] items-center gap-3 pl-3">
          <Svg w={14} h={13}>
            <rect x="0.5" y="2.5" width="5" height="10" fill="#fff" stroke="#7f98a8" /><path d="M0 2h6v3H0z" fill="#4f8fb8" />
            <path d="M10.500 0l1 2.500 2.500 1-2.500 1-1 2.500-1-2.500-2.500-1 2.500-1z" fill="#ffe27a" stroke="#9a7420" strokeWidth="0.6" />
          </Svg>
          <Svg w={13} h={13} smooth>
            <path d="M1 1.500h6M1 5.500h4M1 3.500h5" stroke="#7a8088" /><rect x="4.5" y="1.5" width="7" height="6" fill="#f0d09a" stroke="#8a6a3a" />
            <rect x="6.5" y="6.5" width="5" height="5" fill="#fbe6b8" stroke="#b0702a" /><path d="M1 9.500h5" stroke="#8a6a3a" />
          </Svg>
          <Svg smooth>
            <circle cx="8" cy="8" r="7.8" fill="#1560e0" />
            <path d="M1 6l3-4 4 1-1 5 2 4-3 2C3 12 2 10 1 6zM10 1l3 2 2 5-3 3-3-3z" fill="#18b030" />
            <path d="M4 3l3 1-1 3-2 1zM9 6l3 2-2 5-2-3zM11 2l2 3-2 2zM4 9l2 1-1 3z" fill="#e03020" />
          </Svg>
          <span className="-ml-[3px]">Behaviour</span>
        </div>
        <Sep />
        <span className="w-[209px] pl-2 whitespace-nowrap">Angemeldet als hrickens@DESY.DE</span>
        <Grip />
      </footer>
    </div>
  );
}
